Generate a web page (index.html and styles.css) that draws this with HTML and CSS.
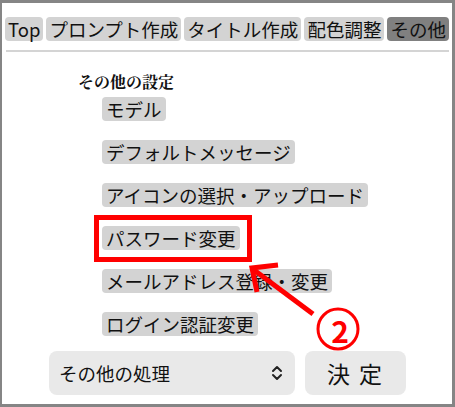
FILE: index.html
```html
<!DOCTYPE html>
<html lang="ja">
<head>
<meta charset="utf-8">
<link rel="stylesheet" href="styles.css">
</head>
<body>
<div class="frame">
  <nav class="tabs">
    <span class="tab">Top</span>
    <span class="tab">プロンプト作成</span>
    <span class="tab">タイトル作成</span>
    <span class="tab">配色調整</span>
    <span class="tab active">その他</span>
  </nav>
  <div class="rule"></div>
  <h2 class="heading">その他の設定</h2>
  <div class="list">
    <span class="item">モデル</span>
    <span class="item">デフォルトメッセージ</span>
    <span class="item">アイコンの選択・アップロード</span>
    <span class="item">パスワード変更</span>
    <span class="item">メールアドレス登録・変更</span>
    <span class="item">ログイン認証変更</span>
  </div>
  <div class="actions">
    <div class="select">
      <span>その他の処理</span>
      <svg class="chev" width="12" height="18" viewBox="0 0 12 18"><path d="M2 7 L6 3 L10 7 M2 11 L6 15 L10 11" fill="none" stroke="#222" stroke-width="2" stroke-linecap="round" stroke-linejoin="round"/></svg>
    </div>
    <div class="submit">決 定</div>
  </div>
  <div class="highlight"></div>
  <svg class="arrow" width="455" height="407" viewBox="0 0 455 407">
    <path d="M313 314 L254 270" stroke="#ff0000" stroke-width="5" fill="none"/>
    <path d="M278 265 L252 268 L257 292" stroke="#ff0000" stroke-width="5" fill="none" stroke-linejoin="miter"/>
    <circle cx="338" cy="329" r="20" stroke="#ff0000" stroke-width="3" fill="#fff"/>
  </svg>
  <span class="num">2</span>
</div>
</body>
</html>
```
FILE: styles.css
```css
* { box-sizing: border-box; }
html, body { margin: 0; padding: 0; background: #fff; }
body { font-family: "Noto Sans CJK JP", "Noto Sans", sans-serif; color: #111; }
.frame {
  position: relative;
  width: 455px;
  height: 407px;
  border-style: solid;
  border-color: #858585;
  border-width: 3px 3px 3px 2px;
  overflow: hidden;
}
.tabs {
  display: flex;
  gap: 3px;
  margin: 14px 0 0 3px;
}
.tab {
  height: 24px;
  line-height: 24px;
  font-size: 18.5px;
  padding: 0 3px;
  border-radius: 4px;
  background: #d3d3d3;
  white-space: nowrap;
}
.tab.active { background: #808080; }
.rule {
  margin: 9px 3px 0 4px;
  height: 2px;
  background: #d4d4d4;
}
.heading {
  margin: 20px 0 0 76px;
  font-family: "Noto Serif CJK JP", "Liberation Serif", serif;
  font-size: 16px;
  font-weight: bold;
  line-height: 20px;
  height: 20px;
}
.list {
  display: flex;
  flex-direction: column;
  align-items: flex-start;
  gap: 19px;
  margin: 5px 0 0 100px;
}
.item {
  height: 24px;
  line-height: 24px;
  font-size: 18.5px;
  padding: 0 4px;
  border-radius: 4px;
  background: #d3d3d3;
  white-space: nowrap;
}
.actions {
  display: flex;
  gap: 10px;
  margin: 15px 0 0 47px;
}
.select {
  width: 246px;
  height: 44px;
  border-radius: 8px;
  background: #e9e9e9;
  display: flex;
  align-items: center;
  justify-content: space-between;
  padding: 0 10px 0 10px;
  font-size: 18.5px;
}
.chev { margin-right: 2px; }
.submit {
  width: 101px;
  height: 44px;
  border-radius: 8px;
  background: #e9e9e9;
  display: flex;
  align-items: center;
  justify-content: center;
  font-size: 23px;
  letter-spacing: 2px;
}
.highlight {
  position: absolute;
  left: 92px;
  top: 212px;
  width: 158px;
  height: 47px;
  border: 5px solid #ff0000;
}
.arrow {
  position: absolute;
  left: -2px;
  top: -3px;
  pointer-events: none;
}
.num {
  position: absolute;
  left: 322px;
  top: 307px;
  width: 32px;
  text-align: center;
  font-size: 30px;
  font-weight: bold;
  color: #ff0000;
  line-height: 40px;
}
```
